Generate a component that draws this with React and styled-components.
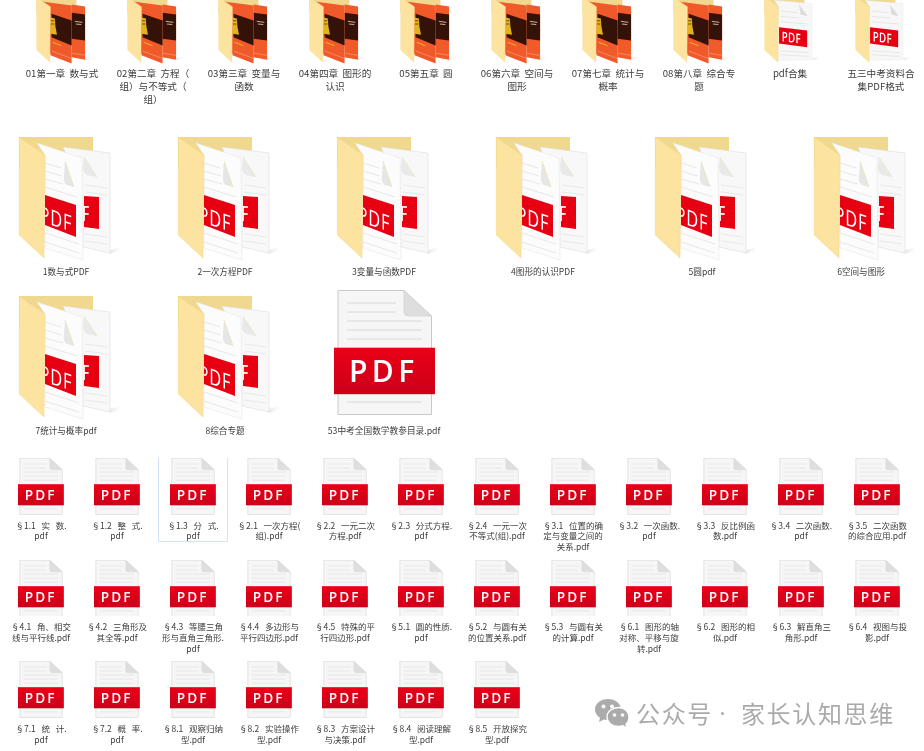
import React from "react";
import styled, { createGlobalStyle } from "styled-components";

const GlobalStyle = createGlobalStyle`
  html, body {
    margin: 0;
    padding: 0;
    background: #fff;
  }
`;

const chapters = [
  { name: "01第一章  数与式", kind: "book" },
  { name: "02第二章  方程（\n组）与不等式（\n组）", kind: "book" },
  { name: "03第三章  变量与\n函数", kind: "book" },
  { name: "04第四章  图形的\n认识", kind: "book" },
  { name: "05第五章  圆", kind: "book" },
  { name: "06第六章  空间与\n图形", kind: "book" },
  { name: "07第七章  统计与\n概率", kind: "book" },
  { name: "08第八章  综合专\n题", kind: "book" },
  { name: "pdf合集", kind: "single" },
  { name: "五三中考资料合\n集PDF格式", kind: "single" },
];

const folders = [
  "1数与式PDF",
  "2一次方程PDF",
  "3变量与函数PDF",
  "4图形的认识PDF",
  "5圆pdf",
  "6空间与图形",
  "7统计与概率pdf",
  "8综合专题",
];

const files = [
  "§1.1   实   数.\npdf",
  "§1.2   整   式.\npdf",
  "§1.3   分   式.\npdf",
  "§2.1   一次方程(\n组).pdf",
  "§2.2   一元二次\n方程.pdf",
  "§2.3   分式方程.\npdf",
  "§2.4   一元一次\n不等式(组).pdf",
  "§3.1   位置的确\n定与变量之间的\n关系.pdf",
  "§3.2   一次函数.\npdf",
  "§3.3   反比例函\n数.pdf",
  "§3.4   二次函数.\npdf",
  "§3.5   二次函数\n的综合应用.pdf",
  "§4.1   角、相交\n线与平行线.pdf",
  "§4.2   三角形及\n其全等.pdf",
  "§4.3   等腰三角\n形与直角三角形.\npdf",
  "§4.4   多边形与\n平行四边形.pdf",
  "§4.5   特殊的平\n行四边形.pdf",
  "§5.1   圆的性质.\npdf",
  "§5.2   与圆有关\n的位置关系.pdf",
  "§5.3   与圆有关\n的计算.pdf",
  "§6.1   图形的轴\n对称、平移与旋\n转.pdf",
  "§6.2   图形的相\n似.pdf",
  "§6.3   解直角三\n角形.pdf",
  "§6.4   视图与投\n影.pdf",
  "§7.1   统   计.\npdf",
  "§7.2   概   率.\npdf",
  "§8.1   观察归纳\n型.pdf",
  "§8.2   实验操作\n型.pdf",
  "§8.3   方案设计\n与决策.pdf",
  "§8.4   阅读理解\n型.pdf",
  "§8.5   开放探究\n型.pdf",
];

const Page = styled.div`
  position: relative;
  width: 924px;
  height: 751px;
  overflow: hidden;
  background: #fff;
  filter: blur(0.3px);
  font-family: "Noto Sans CJK SC", "Liberation Sans", sans-serif;
  color: #3c3c3c;
`;

const ChapterGrid = styled.div`
  display: grid;
  grid-template-columns: repeat(10, 80px);
  column-gap: 11px;
  padding-left: 22px;
  height: 137px;
  align-items: start;
`;

const FolderGrid = styled.div`
  display: grid;
  grid-template-columns: repeat(6, 118px);
  column-gap: 41px;
  row-gap: 12px;
  padding-left: 7px;
  align-items: start;
`;

const FileGrid = styled.div`
  display: grid;
  grid-template-columns: repeat(12, 70px);
  column-gap: 6px;
  row-gap: 7px;
  padding-left: 6px;
  margin-top: 21px;
  align-items: start;
`;

const Tile = styled.div`
  display: flex;
  flex-direction: column;
  align-items: center;
`;

const FileTile = styled(Tile)`
  box-sizing: border-box;
  border: 1px solid ${(p) => (p.$selected ? "#cfe4f7" : "transparent")};
  border-top: 0;
`;

const IconBox = styled.div`
  display: flex;
  align-items: flex-end;
  justify-content: center;
  overflow: hidden;
  width: 100%;
  height: ${(p) => p.$height}px;
`;

const Label = styled.div`
  white-space: pre;
  text-align: center;
  font-size: ${(p) => p.$size}px;
  line-height: ${(p) => p.$lineHeight}px;
  margin-top: ${(p) => p.$gap}px;
`;

const TopIcon = styled.svg`
  align-self: flex-start;
  display: block;
  flex: none;
`;

const FolderSvg = styled.svg`
  display: block;
  flex: none;
`;

const SvgText = styled.text`
  font-family: "Open Sans", "Liberation Sans", sans-serif;
  font-weight: ${(p) => p.$weight || 600};
  fill: #fff;
`;

const Watermark = styled.div`
  position: absolute;
  left: 595px;
  top: 697px;
  display: flex;
  align-items: center;
  gap: 7px;
  color: #ababab;
  font-size: 24px;
  line-height: 32px;
  letter-spacing: 1.65px;
  white-space: pre;
`;

const Dot = styled.span`
  width: 3px;
  height: 3px;
  border-radius: 50%;
  background: #ababab;
  margin: 0 17px 0 8px;
`;

const WatermarkText = styled.div`
  display: flex;
  align-items: center;
`;

const PdfDoc = ({ scale = 1 }) => (
  <TopIcon width={101 * scale} height={125 * scale} viewBox="0 0 101 125">
    <defs>
      <linearGradient id="docRed" x1="0" y1="0" x2="0" y2="1">
        <stop offset="0" stopColor="#e90017" />
        <stop offset="1" stopColor="#cc0019" />
      </linearGradient>
    </defs>
    <path d="M4 .5H70L97.5 26V124.500H4Z" fill="#f6f6f6" stroke="#c9c9c9" />
    <path d="M70 .5L97.5 26H74Q70 26 70 22Z" fill="#dedede" stroke="#cfcfcf" strokeWidth=".6" />
    <g stroke="#d6d6d6" strokeWidth=".9">
      <path d="M13 13H62M13 22H62M13 31H88M13 40H88M13 49H88M13 112H88" />
    </g>
    <rect x="0" y="57.700" width="101" height="46.500" fill="url(#docRed)" />
    <SvgText x="15" y="92" fontSize="30" letterSpacing="4.400">PDF</SvgText>
  </TopIcon>
);

const FolderBack = () => (
  <>
    <defs>
      <linearGradient id="floorShade" x1="0" y1="0" x2="1" y2="0">
        <stop offset="0" stopColor="#e4e4e4" />
        <stop offset="1" stopColor="#ffffff" />
      </linearGradient>
    </defs>
    <path d="M100 114L113 110L114 113L103 117Z" fill="url(#floorShade)" />
    <path d="M12 0H86V30H12Z" fill="#f0d98f" />
  </>
);

const FolderFlap = () => (
  <path d="M12.300 .3L38 18L37 121L12.300 98Z" fill="#fce3a0" stroke="#f5d583" strokeWidth=".5" />
);

// open folder with two tilted pdf pages
const PagesFolder = ({ scale = 1 }) => (
  <FolderSvg width={118 * scale} height={125 * scale} viewBox="0 0 118 125">
    <FolderBack />
    <path d="M56 10L103 16V116L76 110V60Z" fill="#f8f8f8" stroke="#dedede" strokeWidth=".6" />
    <path d="M77 21L90 40L80 38Q76 36 76 30Z" fill="#e9e9e9" />
    <path d="M77 20L90 40" stroke="#ebe2a8" strokeWidth=".7" />
    <g stroke="#dedede" strokeWidth=".6">
      <path d="M78 48L100 51M78 55L100 58M78 97L100 100M78 104L100 107" />
    </g>
    <path d="M77 59L92 60V92L77 90Z" fill="#e60012" />
    <SvgText $weight={400} transform="matrix(.62 .02 0 1 75.500 84)" fontSize="21">F</SvgText>
    <path d="M30 6L75 21L76 123L38 111V18Z" fill="#fcfcfc" stroke="#e8e8e8" strokeWidth=".6" />
    <path d="M58 24L67 50L60 48Q56 46 57 38Z" fill="#e6e6e6" />
    <path d="M58 24L67 50" stroke="#ebe2a8" strokeWidth=".7" />
    <g stroke="#d8d8d8" strokeWidth=".6">
      <path d="M38 26L54 31M38 34L55 39M38 42L56 47M38 50L70 60M38 105L72 116M38 96L72 107" />
    </g>
    <path d="M38 58L69 68V100L38 88Z" fill="#e60012" />
    <SvgText $weight={400} transform="matrix(.75 .24 0 1 32.500 84.300)" fontSize="22" letterSpacing="1">PDF</SvgText>
    <FolderFlap />
  </FolderSvg>
);

// folder holding the orange book cover
const BookFolder = ({ scale = 1 }) => (
  <FolderSvg width={118 * scale} height={125 * scale} viewBox="0 0 118 125">
    <FolderBack />
    <path d="M77 14L102 17.600V116L77 111.400Z" fill="#f15a29" />
    <path d="M77 29L102 32.400V80.500L77 77.400Z" fill="#341208" />
    <path d="M83 45L97 47M85 50L95 51" stroke="#d9c9b8" strokeWidth="1.600" />
    <path d="M77 104L102 108" stroke="#f9b090" strokeWidth="1" />
    <path d="M21.600 8.300L77 15.700V123L38 108Z" fill="#f0592a" />
    <path d="M40 31L77 43.500V90L40 74.500Z" fill="#341208" />
    <path d="M38 38L46 40L47 54L50 70L38 68Z" fill="#e3b21d" />
    <path d="M39 44H45M39 50H45" stroke="#4a2a10" strokeWidth="1.400" />
    <path d="M42 84L58 90" stroke="#fcc11c" strokeWidth="1.600" />
    <path d="M40 100L77 114" stroke="#f9b090" strokeWidth="1" />
    <FolderFlap />
  </FolderSvg>
);

// folder with one pdf page, for the last two chapters
const SingleFolder = ({ scale = 1 }) => (
  <FolderSvg width={118 * scale} height={125 * scale} viewBox="0 0 118 125">
    <FolderBack />
    <path d="M30 6L100 12V116L38 117V18Z" fill="#f7f7f7" stroke="#e4e4e4" strokeWidth=".6" />
    <path d="M76 14L92 35L79 33Z" fill="#dcdcdc" />
    <g stroke="#d8d8d8" strokeWidth="1">
      <path d="M42 26L72 29M42 36L76 39M42 46L92 50M42 100L94 103M42 107L94 110" />
    </g>
    <path d="M39 56L91 62V93L39 86Z" fill="#e60012" />
    <SvgText transform="matrix(.72 .09 0 1 44 82)" fontSize="25" letterSpacing="1">PDF</SvgText>
    <FolderFlap />
  </FolderSvg>
);

const ChapterIcon = ({ kind }) =>
  kind === "book" ? <BookFolder scale={0.54} /> : <SingleFolder scale={0.54} />;

const WeChatMark = () => (
  <svg width="34" height="30" viewBox="0 0 34 30">
    <path d="M13 1C6 1 0 5.500 0 11.500C0 15 2 18 5 20L4 24L9 21.500C11 22 13 22 15 22C24 22 26 14 26 11.500C26 5.500 20 1 13 1Z" fill="#ababab" />
    <circle cx="8.500" cy="8.500" r="2" fill="#fff" />
    <circle cx="17" cy="8.500" r="2" fill="#fff" />
    <path d="M23.500 9.500C17 9.500 12 13.800 12 19C12 24.500 17 28.500 23.500 28.500C25 28.500 26.500 28.200 28 27.700L32 30L31 26.200C33 24.500 34 22 34 19.500C34 13.800 29.500 9.500 23.500 9.500Z" fill="#ababab" stroke="#fff" strokeWidth="1.300" />
    <circle cx="19.500" cy="17" r="1.800" fill="#fff" />
    <circle cx="27.500" cy="17" r="1.800" fill="#fff" />
  </svg>
);

const App = () => {
  return (
    <Page>
      <GlobalStyle />
      <ChapterGrid>
        {chapters.map((c) => (
          <Tile key={c.name}>
            <IconBox $height={64}>
              <ChapterIcon kind={c.kind} />
            </IconBox>
            <Label $size={9.6} $lineHeight={13} $gap={2.5}>
              {c.name}
            </Label>
          </Tile>
        ))}
      </ChapterGrid>

      <FolderGrid>
        {folders.map((name, index) => (
          <Tile key={name}>
            <IconBox $height={index < 6 ? 125 : 131}>
              <PagesFolder />
            </IconBox>
            <Label $size={8.6} $lineHeight={13} $gap={3}>
              {name}
            </Label>
          </Tile>
        ))}
        <Tile>
          <IconBox $height={131}>
            <PdfDoc />
          </IconBox>
          <Label $size={8.7} $lineHeight={13} $gap={3}>
            53中考全国数学教参目录.pdf
          </Label>
        </Tile>
      </FolderGrid>

      <FileGrid>
        {files.map((name, index) => (
          <FileTile key={name} $selected={index === 2}>
            <IconBox $height={57}>
              <PdfDoc scale={0.454} />
            </IconBox>
            <Label $size={8.5} $lineHeight={10.7} $gap={4.6}>
              {name}
            </Label>
          </FileTile>
        ))}
      </FileGrid>

      <Watermark>
        <WeChatMark />
        <WatermarkText>
          <span>公众号</span>
          <Dot />
          <span>家长认知思维</span>
        </WatermarkText>
      </Watermark>
    </Page>
  );
};

export default App;
